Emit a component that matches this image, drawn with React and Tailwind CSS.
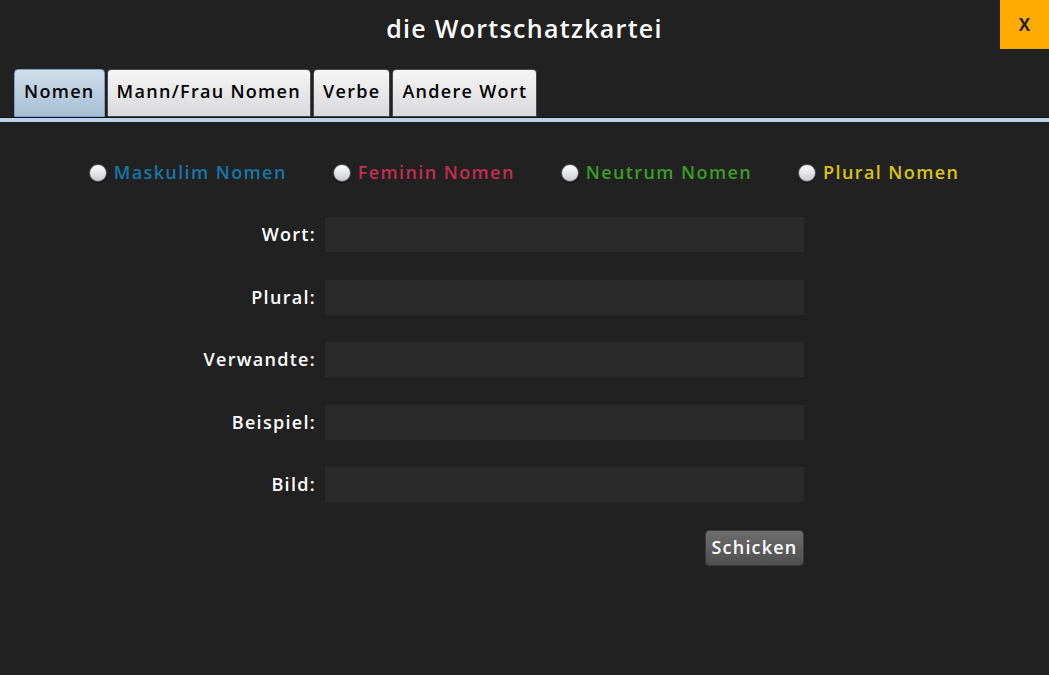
import React from "react";

const font = { fontFamily: '"Open Sans", "Noto Sans", sans-serif' };

const tabs = ["Nomen", "Mann/Frau Nomen", "Verbe", "Andere Wort"];

const genders = [
	{ label: "Maskulim Nomen", color: "text-[#1776a6]" },
	{ label: "Feminin Nomen", color: "text-[#c22d52]" },
	{ label: "Neutrum Nomen", color: "text-[#3b9c26]" },
	{ label: "Plural Nomen", color: "text-[#d9c414]" },
];

const fields = ["Wort:", "Plural:", "Verwandte:", "Beispiel:", "Bild:"];

const App = () => {
	return (
		<div
			style={font}
			className="w-[1049px] h-[675px] bg-[#212121] flex flex-col overflow-hidden"
		>
			{/* header */}
			<div className="flex h-[60px]">
				<div className="flex-1 flex items-center justify-center pl-[49px] pb-[3px]">
					<h1 className="text-white text-[25px] font-semibold tracking-[1.3px]">
						die Wortschatzkartei
					</h1>
				</div>
				<button className="w-[49px] h-[49px] bg-[#ffab00] text-[#212121] text-[17px] font-bold flex items-center justify-center">
					X
				</button>
			</div>

			{/* tabs */}
			<div className="flex px-[14px] pt-[9px] gap-[2px] border-b border-[#111]">
				{tabs.map((t, i) => (
					<div
						key={t}
						className={
							i === 0
								? "h-[48px] px-[9px] pb-[3px] flex items-center rounded-t-[4px] border border-[#7b9fc4] bg-gradient-to-b from-[#cfdeec] to-[#a7bfd6] text-black text-[18px] font-semibold tracking-[1.3px]"
								: "h-[48px] px-[9px] pb-[3px] flex items-center rounded-t-[4px] border border-[#4a4a4a] bg-gradient-to-b from-[#f6f6f6] to-[#d9d9dc] text-black text-[18px] font-semibold tracking-[1.3px]"
						}
					>
						{t}
					</div>
				))}
			</div>
			<div className="h-[4px] bg-[#bcd0e6]" />

			{/* radios */}
			<div className="flex justify-center gap-[46px] mt-[37px] pr-[1px]">
				{genders.map((g) => (
					<label key={g.label} className="flex items-center gap-[7px]">
						<span className="w-[18px] h-[18px] rounded-full border border-[#555] bg-gradient-to-b from-[#ffffff] to-[#c9cbd0] shadow-[0_1px_1px_rgba(0,0,0,0.6)]" />
						<span className={`${g.color} text-[18px] font-semibold tracking-[1.4px]`}>
							{g.label}
						</span>
					</label>
				))}
			</div>

			{/* form */}
			<div className="ml-[190px] mt-[31px] w-[614px] flex flex-col gap-[27.5px]">
				{fields.map((f) => (
					<div key={f} className="flex items-center gap-[9px]">
						<span className="w-[126px] text-right text-white text-[18px] font-semibold tracking-[1.3px] whitespace-nowrap">
							{f}
						</span>
						<div className="w-[479px] h-[35px] bg-[#2a2a2a]" />
					</div>
				))}
				<div className="flex justify-end">
					<button className="w-[99px] h-[36px] rounded-[4px] border border-[#3a3a3a] bg-gradient-to-b from-[#6e6e6e] to-[#4e4e4e] text-white text-[18px] font-semibold tracking-[1.2px]">
						Schicken
					</button>
				</div>
			</div>
		</div>
	);
};

export default App;
